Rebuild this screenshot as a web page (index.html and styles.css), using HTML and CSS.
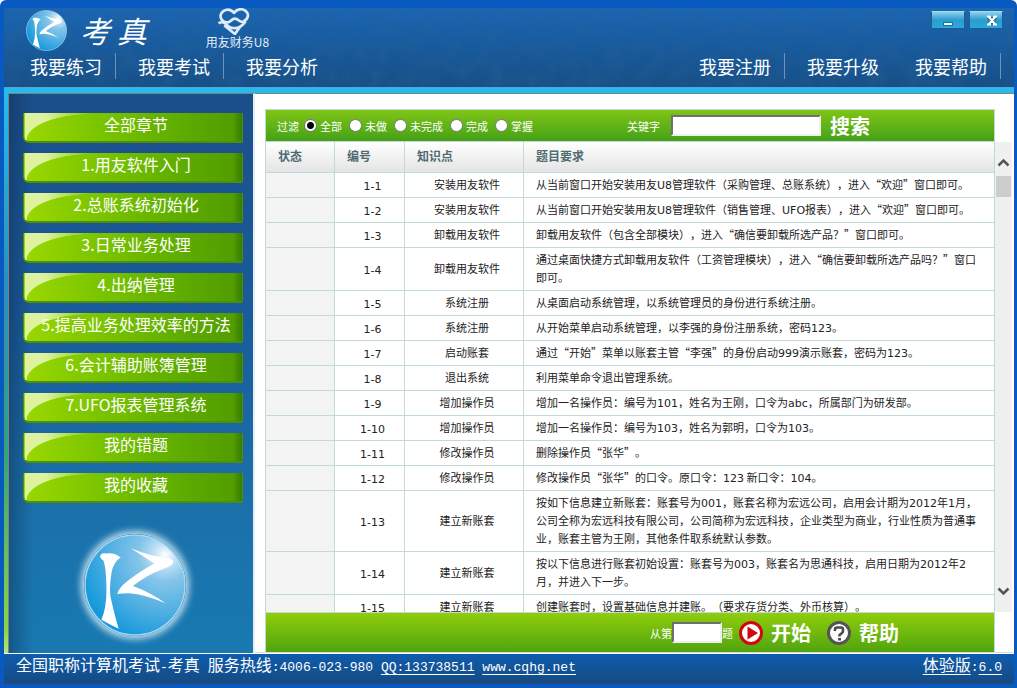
FILE: index.html
```html
<!DOCTYPE html>
<html lang="zh-CN">
<head>
<meta charset="utf-8">
<title>考真 - 用友财务U8</title>
<link rel="stylesheet" href="styles.css">
</head>
<body>
<svg class="defs" aria-hidden="true">
  <defs>
    <radialGradient id="orb" cx="80%" cy="20%" r="88%">
      <stop offset="0" stop-color="#fff"/>
      <stop offset=".12" stop-color="#c3e2f5"/>
      <stop offset=".3" stop-color="#84c5ea"/>
      <stop offset=".6" stop-color="#58b2e3"/>
      <stop offset="1" stop-color="#1599dc"/>
    </radialGradient>
    <filter id="grain" x="0" y="0" width="100%" height="100%">
      <feTurbulence type="fractalNoise" baseFrequency=".06" numOctaves="4" seed="7"/>
      <feColorMatrix values="0 0 0 0 0.02  0 0 0 0 0.12  0 0 0 0 0.32  1.6 0 0 0 -.55"/>
    </filter>
    <symbol id="kz" viewBox="0 0 100 100">
      <circle cx="50" cy="50" r="49" fill="url(#orb)" stroke="#a6d8f2" stroke-width="1.5"/>
      <path fill="#fff" d="M16 21 Q17 18 22 19 Q30 18 36 23 Q29 27 27 38 Q24 56 27 66 Q30 80 34 93 Q26 89 17 84 Q22 73 22 56 Q22 34 19 26 Q15 23 16 21Z"/>
      <path fill="#fff" d="M46 14 Q65 22 84 24 Q89 26 87 29 Q85 32 78 34 Q60 41 48 51 Q65 57 80 68 Q60 59 44 58 Q35 58 33 59 Q32 57 38 50 Q52 38 69 29 Q55 20 46 14Z"/>
    </symbol>
  </defs>
</svg>
<div class="window">
  <header class="header">
    <svg class="texture" aria-hidden="true"><rect width="100%" height="100%" filter="url(#grain)"/></svg>
    <div class="brand">
      <svg class="brand-logo" aria-hidden="true"><use href="#kz"/></svg>
      <h1 class="brand-name">考 真</h1>
      <div class="product">
        <svg class="product-icon" viewBox="0 0 34 28" fill="none" stroke="#dcebf6" stroke-width="2.8" stroke-linejoin="round" aria-hidden="true">
          <path d="M17 5 C12 -1 4 2 3 8 C3 12 6 15 10 15 C14 15 14 11 18 11 C22 11 23 16 27 14 C32 11 33 6 29 3 C25 0 20 1 17 5Z"/>
          <path d="M1 16 C6 12 9 18 13 20 C18 22 24 21 29 14 M7 18 L18 27 L23 20"/>
        </svg>
        <span>用友财务U8</span>
      </div>
      <div class="controls">
        <button type="button" class="control" aria-label="最小化"><svg width="12" height="12" viewBox="0 0 12 12"><rect x="1.5" y="7.500" width="9" height="3" fill="#e8fbff" stroke="#1f6f93"/></svg></button>
        <button type="button" class="control control-close" aria-label="关闭"><svg width="12" height="12" viewBox="0 0 12 12"><path d="M2.500 1.500L9.500 9.500M9.500 1.500L2.500 9.500" stroke="#1f6f93" stroke-width="4.500"/><path d="M2.500 1.500L9.500 9.500M9.500 1.500L2.500 9.500M1 1.500h4M7 1.500h4M1 9.500h4M7 9.500h4" stroke="#fff" stroke-width="2"/></svg></button>
      </div>
    </div>
    <nav class="nav">
      <a class="divided" href="#practice">我要练习</a>
      <a class="divided" href="#exam">我要考试</a>
      <a href="#analysis">我要分析</a>
      <span class="nav-space"></span>
      <a class="divided" href="#register">我要注册</a>
      <a href="#upgrade">我要升级</a>
      <a class="divided" href="#help">我要帮助</a>
    </nav>
  </header>
  <div class="body">
    <aside class="sidebar">
      <button type="button">全部章节</button>
      <button type="button">1.用友软件入门</button>
      <button type="button">2.总账系统初始化</button>
      <button type="button">3.日常业务处理</button>
      <button type="button">4.出纳管理</button>
      <button type="button">5.提高业务处理效率的方法</button>
      <button type="button">6.会计辅助账簿管理</button>
      <button type="button">7.UFO报表管理系统</button>
      <button type="button">我的错题</button>
      <button type="button">我的收藏</button>
      <svg class="side-logo" aria-hidden="true"><use href="#kz"/></svg>
    </aside>
    <main class="content">
      <form class="filter">
        <span>过滤</span>
        <label><input type="radio" name="state" checked>全部</label>
        <label><input type="radio" name="state">未做</label>
        <label><input type="radio" name="state">未完成</label>
        <label><input type="radio" name="state">完成</label>
        <label><input type="radio" name="state">掌握</label>
        <label class="keyword">关键字<input type="text" class="field"></label>
        <button type="button" class="text-button">搜索</button>
      </form>
      <div class="list">
        <div class="viewport">
          <table>
            <colgroup><col class="c-state"><col class="c-no"><col class="c-topic"><col></colgroup>
            <thead><tr><th>状态</th><th>编号</th><th>知识点</th><th>题目要求</th></tr></thead>
            <tbody>
              <tr><td></td><td>1-1</td><td>安装用友软件</td><td>从当前窗口开始安装用友<i>U8</i>管理软件（采购管理、总账系统），进入“欢迎”窗口即可。</td></tr>
              <tr><td></td><td>1-2</td><td>安装用友软件</td><td>从当前窗口开始安装用友<i>U8</i>管理软件（销售管理、<i>UFO</i>报表），进入“欢迎”窗口即可。</td></tr>
              <tr><td></td><td>1-3</td><td>卸载用友软件</td><td>卸载用友软件（包含全部模块），进入“确信要卸载所选产品？”窗口即可。</td></tr>
              <tr><td></td><td>1-4</td><td>卸载用友软件</td><td>通过桌面快捷方式卸载用友软件（工资管理模块），进入“确信要卸载所选产品吗？”窗口即可。</td></tr>
              <tr><td></td><td>1-5</td><td>系统注册</td><td>从桌面启动系统管理，以系统管理员的身份进行系统注册。</td></tr>
              <tr><td></td><td>1-6</td><td>系统注册</td><td>从开始菜单启动系统管理，以李强的身份注册系统，密码<i>123</i>。</td></tr>
              <tr><td></td><td>1-7</td><td>启动账套</td><td>通过“开始”菜单以账套主管“李强”的身份启动<i>999</i>演示账套，密码为<i>123</i>。</td></tr>
              <tr><td></td><td>1-8</td><td>退出系统</td><td>利用菜单命令退出管理系统。</td></tr>
              <tr><td></td><td>1-9</td><td>增加操作员</td><td>增加一名操作员：编号为<i>101</i>，姓名为王刚，口令为<i>abc</i>，所属部门为研发部。</td></tr>
              <tr><td></td><td>1-10</td><td>增加操作员</td><td>增加一名操作员：编号为<i>103</i>，姓名为郭明，口令为<i>103</i>。</td></tr>
              <tr><td></td><td>1-11</td><td>修改操作员</td><td>删除操作员“张华”。</td></tr>
              <tr><td></td><td>1-12</td><td>修改操作员</td><td>修改操作员“张华”的口令。原口令：<i>123</i> 新口令：<i>104</i>。</td></tr>
              <tr><td></td><td>1-13</td><td>建立新账套</td><td>按如下信息建立新账套：账套号为<i>001</i>，账套名称为宏远公司，启用会计期为<i>2012</i>年<i>1</i>月，公司全称为宏远科技有限公司，公司简称为宏远科技，企业类型为商业，行业性质为普通事业，账套主管为王刚，其他条件取系统默认参数。</td></tr>
              <tr><td></td><td>1-14</td><td>建立新账套</td><td>按以下信息进行账套初始设置：账套号为<i>003</i>，账套名为思通科技，启用日期为<i>2012</i>年<i>2</i>月，并进入下一步。</td></tr>
              <tr><td></td><td>1-15</td><td>建立新账套</td><td>创建账套时，设置基础信息并建账。（要求存货分类、外币核算）。</td></tr>
            </tbody>
          </table>
        </div>
        <div class="scrollbar" aria-hidden="true">
          <svg width="13" height="9" viewBox="0 0 13 9"><path d="M1.500 7.500L6.500 2.500L11.500 7.500" fill="none" stroke="#555" stroke-width="2.500"/></svg>
          <div class="thumb"></div>
          <svg class="down" width="13" height="9" viewBox="0 0 13 9"><path d="M1.500 1.500L6.500 6.500L11.500 1.500" fill="none" stroke="#555" stroke-width="2.500"/></svg>
        </div>
      </div>
      <form class="actions">
        <label>从第<input type="text" class="field">题</label>
        <button type="button" class="text-button start">
          <svg width="24" height="24" viewBox="0 0 24 24" aria-hidden="true"><circle cx="12" cy="12" r="10.500" fill="#fff" stroke="#d0070e" stroke-width="3"/><path d="M8.500 5.500L19 12L8.500 18.500Z" fill="#d0070e"/></svg>开始</button>
        <button type="button" class="text-button">
          <svg width="24" height="24" viewBox="0 0 24 24" aria-hidden="true"><circle cx="12" cy="12" r="10.500" fill="#fff" stroke="#555" stroke-width="3"/><path d="M8 10V8.500Q8 6.500 10 6.500H14Q16 6.500 16 8.500V10Q16 11 15 12L12.500 14V15.500" fill="none" stroke="#4b4b4b" stroke-width="2.600"/><path d="M11 17h3v2.500h-3z" fill="#4b4b4b"/></svg>帮助</button>
      </form>
    </main>
  </div>
  <footer class="footer">
    <span>全国职称计算机考试<i>-</i>考真<i> </i>服务热线<i>:4006-023-980 </i><a href="#qq"><i>QQ:133738511</i></a><i> </i><a href="#site"><i>www.cqhg.net</i></a></span>
    <span><a href="#version">体验版</a><i>:</i><a href="#version"><i>6.0</i></a></span>
  </footer>
</div>
</body>
</html>
```

FILE: styles.css
```css
* { box-sizing: border-box; }

body {
  margin: 0;
  background: #fff;
  font-family: "Noto Sans CJK SC", sans-serif;
  font-size: 11px;
  line-height: 18px;
  text-spacing-trim: space-all;
}

a { color: inherit; }
button { font-family: inherit; cursor: pointer; }
.defs { position: absolute; width: 0; height: 0; }

.window {
  display: flex;
  flex-direction: column;
  height: 100vh;
  padding: 8px 3px 4px 4px;
  border-radius: 6px 6px 0 0;
  background: #0859c0;
}

/* header */
.header {
  position: relative;
  flex: none;
  height: 80px;
  border-bottom: 1px solid #5f9fd4;
  background: linear-gradient(#1b66b4, #185a9c 50%, #174f86);
  color: #fff;
}
.texture {
  position: absolute;
  width: 100%;
  height: 100%;
  opacity: .5;
}
.brand {
  position: relative;
  display: flex;
  align-items: flex-start;
  height: 42px;
  padding: 0 11px 0 22px;
}
.brand-logo { width: 41px; height: 41px; margin-top: 2px; }
.brand-name {
  margin: 2px 0 0 13px;
  font-size: 30px;
  font-weight: 400;
  font-style: italic;
  line-height: 40px;
}
.product {
  display: flex;
  flex-direction: column;
  align-items: center;
  margin-left: 59px;
  font-size: 12px;
  line-height: 13px;
  color: #e4eef8;
}
.product-icon { width: 34px; height: 27px; margin-right: 6px; }
.controls { display: flex; gap: 4px; margin: 3px 0 0 auto; }
.control {
  width: 34px;
  height: 18px;
  padding: 0;
  border: 1px solid #1d5f8c;
  border-top-color: #9edcf2;
  background: linear-gradient(#8fd0ea, #2b9ccf 50%, #2ba8da);
}
.control svg { display: block; margin: 1px auto 0; }
.control-close svg { margin-left: 16px; }

.nav { position: relative; display: flex; padding: 0 13px 0 4px; }
.nav a {
  flex: none;
  width: 108px;
  height: 26px;
  margin-top: 3px;
  padding-left: 22px;
  border-right: 1px solid transparent;
  font-size: 18px;
  line-height: 26px;
  text-decoration: none;
}
.nav .divided { border-right-color: #6f93b8; }
.nav-space { flex: 1; }

/* body */
.body {
  display: flex;
  flex: 1;
  min-height: 0;
  border-top: 5px solid #22b9ee;
  border-left: 4px solid #35bdf0;
  border-image: linear-gradient(#22bdf0, #2a8fc0 35%, #35a27c 65%, #8ad648 96%, #b8e680) 5 0 0 4;
}
.sidebar {
  display: flex;
  flex: none;
  flex-direction: column;
  gap: 10px;
  align-items: flex-start;
  width: 247px;
  padding: 19px 0 0 14px;
  border: solid #827f7d;
  border-width: 1px 0 0 1px;
  border-right: 2px solid #e6eef4;
  background:
    linear-gradient(90deg, rgba(10, 40, 75, .4), transparent 24px),
    linear-gradient(#1b4f8b, #1a5c9b 40%, #1b71aa 75%, #1879b1);
}
.sidebar button {
  position: relative;
  flex: none;
  width: 220px;
  height: 30px;
  padding: 0 0 6px 6px;
  border: 1px solid #4c8f08;
  border-width: 0 1px 2px;
  border-radius: 0 0 2px 6px;
  background: linear-gradient(90deg, #9bd800, #7ac400 35%, #5fae00 70%, #529d00 96%, #387c00);
  font-size: 16px;
  line-height: 22px;
  white-space: nowrap;
  color: #fff;
}
.sidebar button::before {
  content: "";
  position: absolute;
  top: 0;
  left: 1px;
  width: 66px;
  height: 27px;
  background: radial-gradient(65px 26px at 100% 100%, transparent 98%, rgba(240, 250, 200, .8));
  -webkit-mask-image: linear-gradient(90deg, #000 30%, transparent);
  mask-image: linear-gradient(90deg, #000 30%, transparent);
}
.side-logo {
  width: 102px;
  height: 102px;
  margin: 21px 0 0 61px;
  border-radius: 50%;
  box-shadow: 0 0 7px 3px rgba(225, 243, 252, .85);
}

/* content */
.content {
  display: flex;
  flex: 1;
  flex-direction: column;
  min-width: 0;
  padding: 15px 2px 0 10px;
  border-top: 1px solid #827f7d;
  border-bottom: 1px solid #ddd;
  background: #fff;
}
.filter,
.actions {
  display: flex;
  flex: none;
  align-items: center;
  margin-right: 17px;
  border: 1px solid #c1dad7;
  color: #fff;
}
.filter {
  gap: 7px;
  height: 33px;
  padding-left: 11px;
  background: linear-gradient(#80c516, #44a118);
}
.filter > span { margin-right: -2px; }
.filter label { display: flex; align-items: center; }
.filter input[type="radio"] {
  appearance: none;
  width: 13px;
  height: 13px;
  margin: 0 3px 0 0;
  border: 1px solid #777;
  border-radius: 50%;
  background: #fff;
}
.filter input[type="radio"]:checked {
  background: radial-gradient(circle, #000 3px, #fff 4px);
}
.filter .keyword { gap: 11px; margin-left: 87px; }
.field {
  border: 2px solid #eee;
  border-top-color: #707070;
  border-left-color: #707070;
  background: #fff;
}
.keyword .field { width: 150px; height: 21px; }
.text-button {
  display: flex;
  align-items: center;
  padding: 0;
  border: 0;
  background: none;
  font-size: 20px;
  font-weight: 700;
  line-height: 26px;
  color: #fff;
}
.filter .text-button { margin-left: 2px; }

.list { display: flex; flex: 1; min-height: 0; }
.viewport { flex: 1; min-width: 0; overflow: hidden; }
table {
  width: 100%;
  table-layout: fixed;
  border-collapse: separate;
  border-spacing: 0;
  border-left: 1px solid #c1dad7;
  color: #222;
}
.c-state { width: 69px; }
.c-no { width: 70px; }
.c-topic { width: 119px; }
th {
  height: 31px;
  padding: 0 0 2px 12px;
  border-right: 1px solid #c1dad7;
  border-bottom: 1px solid #c1dad7;
  background: linear-gradient(#fff, #e4e4e4);
  font-size: 12px;
  text-align: left;
  color: #4f6b72;
}
td {
  padding: 2px 14px 4px 12px;
  border-right: 1px solid #c1dad7;
  border-bottom: 1px solid #c1dad7;
  line-height: 18px;
}
td i {
  font-family: "DejaVu Sans", sans-serif;
  font-style: normal;
  line-height: 11px;
}
td:nth-child(1) { background: #f3f3f3; }
td:nth-child(2) {
  padding: 5px 0 1px 6px;
  font-family: "DejaVu Sans", sans-serif;
  text-align: center;
}
td:nth-child(3) { padding: 2px 0 4px 6px; text-align: center; }

.scrollbar {
  display: flex;
  flex: none;
  flex-direction: column;
  align-items: center;
  width: 17px;
  padding: 16px 0;
  background: #f0f0f0;
}
.thumb { width: 15px; height: 21px; margin-top: 9px; background: #cdcdcd; }
.down { margin-top: auto; }

.actions {
  gap: 16px;
  height: 40px;
  padding-left: 384px;
  border-bottom: 0;
  background: linear-gradient(#8fcd0c, #50a40f);
}
.actions label { display: flex; align-items: center; }
.actions .field { width: 50px; height: 21px; }
.actions svg { margin-right: 8px; }
.start { margin-left: -10px; }

/* footer */
.footer {
  display: flex;
  flex: none;
  justify-content: space-between;
  height: 31px;
  padding: 0 12px;
  border-top: 1px solid #fff;
  border-bottom: 1px solid #34456f;
  background: linear-gradient(#0e5cad, #154b83);
  font-size: 16px;
  line-height: 20px;
  color: #fff;
}
.footer a { text-underline-offset: 3px; }
.footer i {
  font-family: "Liberation Mono", monospace;
  font-size: 13px;
  font-style: normal;
  white-space: pre;
}
```
